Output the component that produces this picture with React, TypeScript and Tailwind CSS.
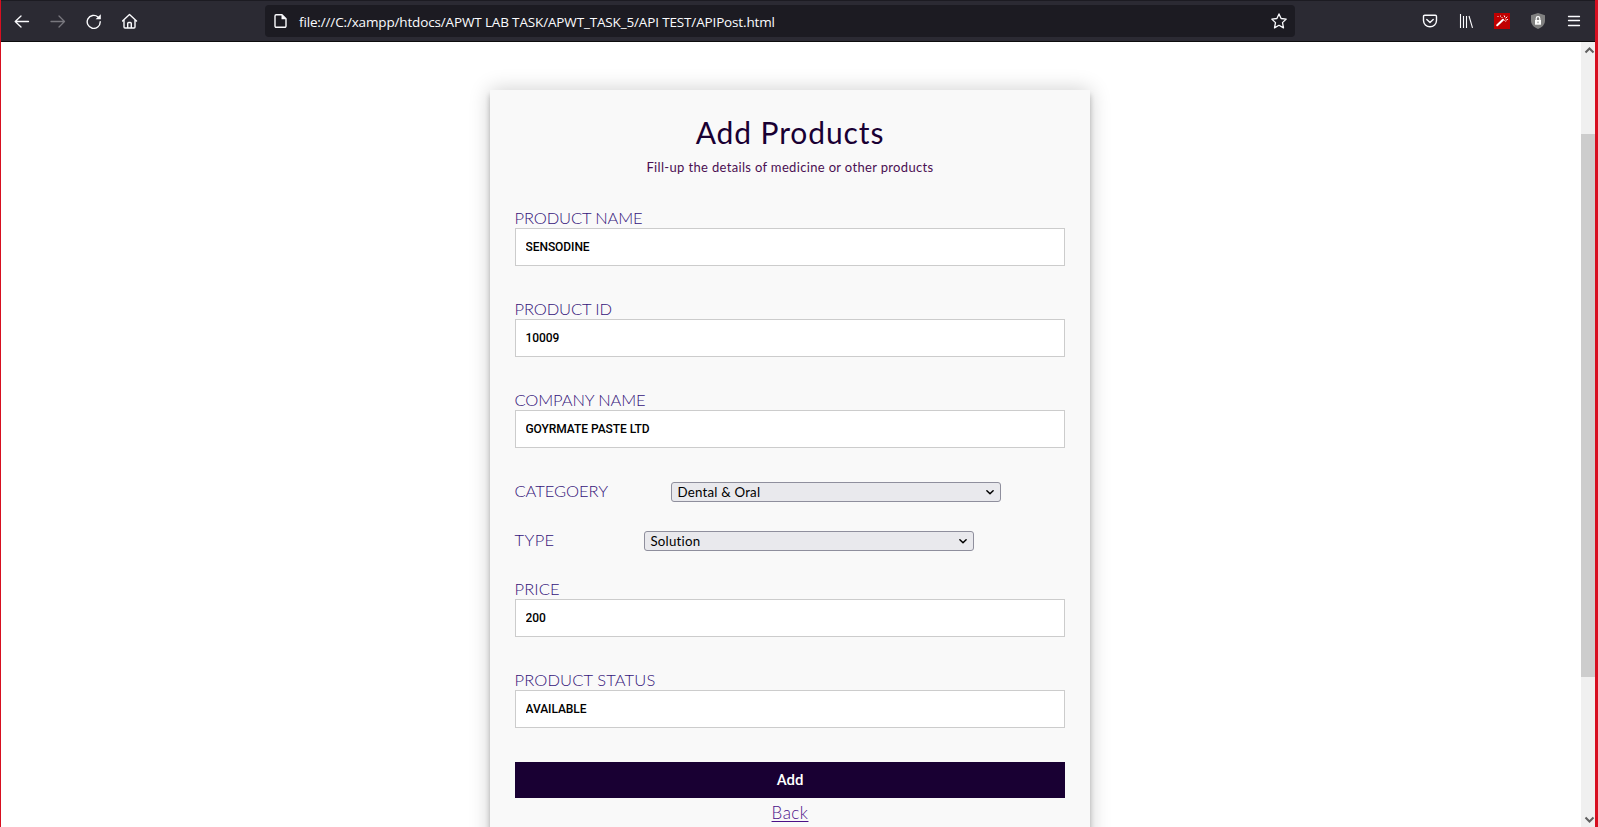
import React from "react";

const heading = "font-['Lato','Open_Sans',sans-serif]";

function BrowserBar() {
  return (
    <header className="flex h-[42px] shrink-0 items-center border-t border-b border-t-[#1c1b22] border-b-[#0c0c0d] bg-[#2b2a33] text-[#fbfbfe]">
      <nav className="flex w-[264px] items-center gap-5 pl-[13px]">
        <svg width="16" height="16" viewBox="0 0 16 16" fill="none" stroke="currentColor" strokeWidth="1.3" strokeLinecap="round" strokeLinejoin="round">
          <path d="M14.500 8.500H1.200M7 3L1.200 8.500L7 14" />
        </svg>
        <svg className="text-[#78777e]" width="16" height="16" viewBox="0 0 16 16" fill="none" stroke="currentColor" strokeWidth="1.3" strokeLinecap="round" strokeLinejoin="round">
          <path d="M1 8.500H14.500M9 3L14.500 8.500L9 14" />
        </svg>
        <svg width="16" height="16" viewBox="0 0 16 16" fill="none" stroke="currentColor" strokeWidth="1.4" strokeLinecap="round">
          <path d="M14.200 8.800A6.500 6.500 0 1 1 12 4" />
          <path d="M14.800 1.200V6.200H9.600Z" fill="currentColor" stroke="none" />
        </svg>
        <svg width="16" height="16" viewBox="0 0 16 16" fill="none" stroke="currentColor" strokeWidth="1.4" strokeLinejoin="round" strokeLinecap="round">
          <path d="M0.500 8L7.500 1.500L14.500 8M2 7V14A1 1 0 0 0 3 15H12A1 1 0 0 0 13 14V7M5.700 15V10.500A1 1 0 0 1 6.700 9.500H8.300A1 1 0 0 1 9.300 10.500V15" />
        </svg>
      </nav>
      <div className="flex h-8 w-[1030px] items-center rounded bg-[#1c1b22] pr-2 pl-2">
        <svg width="16" height="16" viewBox="0 0 16 16" fill="none" stroke="currentColor" strokeWidth="1.4" strokeLinejoin="round">
          <path d="M9 1.700H3.200A1.200 1.200 0 0 0 2 2.900V13.100A1.200 1.200 0 0 0 3.200 14.300H11.800A1.200 1.200 0 0 0 13 13.100V5.700Z" />
          <path d="M8.500 1.500V6.200H13.200Z" fill="currentColor" stroke="none" />
        </svg>
        <span className="mt-[2px] ml-[10px] flex-1 font-['Open_Sans','Noto_Sans',sans-serif] text-[13.5px] leading-[30px] tracking-[-0.15px] whitespace-nowrap">
          file:///C:/xampp/htdocs/APWT LAB TASK/APWT_TASK_5/API TEST/APIPost.html
        </span>
        <svg width="16" height="16" viewBox="0 0 16 16" fill="none" stroke="currentColor" strokeWidth="1.3" strokeLinejoin="round">
          <path d="M8 0.900L10.100 5.500L15.200 6.100L11.500 9.600L12.500 14.900L8 12.300L3.500 14.900L4.500 9.600L0.800 6.100L5.900 5.500Z" />
        </svg>
      </div>
      <div className="ml-auto flex items-center gap-5 pr-[13px]">
        <svg width="16" height="16" viewBox="0 0 16 16" fill="none" stroke="currentColor" strokeWidth="1.4" strokeLinecap="round" strokeLinejoin="round">
          <path d="M2.700 2.200H13.300A1.200 1.200 0 0 1 14.500 3.400V7.500A6.500 6.200 0 0 1 1.500 7.500V3.400A1.200 1.200 0 0 1 2.700 2.200ZM4.800 6.400L8 9.400L11.200 6.400" />
        </svg>
        <svg width="16" height="16" viewBox="0 0 16 16" fill="none" stroke="currentColor" strokeWidth="1.1">
          <path d="M2.500 1V15M5.500 3V15M8.500 3V15M11 3L14.500 14.800" />
        </svg>
        <svg width="16" height="16" viewBox="0 0 16 16" fill="none" stroke="#fff" strokeLinecap="round">
          <path d="M0 0H16V16H0Z" fill="#c00000" stroke="none" />
          <path d="M3.200 12.300L9 6.700" strokeWidth="2" />
          <path d="M4 3.500V3.600M6.500 3V3.200M8 4.500V4.600M10.300 2.800L10.800 4M13 4L11.800 5.200M13.500 6.500H13.400M10.800 7.500L11.500 8.300M12 6.700L12.500 7" strokeWidth="1" />
        </svg>
        <svg width="16" height="16" viewBox="0 0 16 16">
          <path d="M8 0L15 2.200V7.500C15 11.500 12 14.500 8 16C4 14.500 1 11.500 1 7.500V2.200Z" fill="#808080" />
          <path d="M5 7H11V11.700H5Z" fill="#fff" />
          <path d="M6.200 7V5.500A1.800 1.800 0 0 1 9.800 5.500V7" fill="none" stroke="#fff" strokeWidth="1.2" />
          <path d="M8 8.500V10.200" stroke="#808080" />
        </svg>
        <svg width="16" height="16" viewBox="0 0 16 16" fill="none" stroke="currentColor" strokeWidth="1.3" strokeLinecap="round">
          <path d="M2.500 3.500H13.500M2.500 7.500H13.500M2.500 12.500H13.500" />
        </svg>
      </div>
    </header>
  );
}

function Label({ children, tracking }: { children: string; tracking: string }) {
  return (
    <span className={`${heading} -ml-[0.5px] block text-[16.5px] leading-[19px] font-light whitespace-nowrap text-[#35157a] ${tracking}`}>
      {children}
    </span>
  );
}

function Field({ label, value, tracking = "tracking-[-0.13px]" }: { label: string; value: string; tracking?: string }) {
  return (
    <label className="block">
      <Label tracking={tracking}>{label}</Label>
      <input
        className="block h-[38px] w-full border border-[#cccccc] bg-white px-[9.5px] font-['Roboto',sans-serif] text-xs font-medium tracking-[-0.06px] text-black outline-none"
        defaultValue={value}
      />
    </label>
  );
}

function SelectRow({ label, value, indent, tracking }: { label: string; value: string; indent: string; tracking: string }) {
  return (
    <div className="flex h-5 items-start">
      <div className={indent}>
        <Label tracking={tracking}>{label}</Label>
      </div>
      <button className={`${heading} flex h-5 w-[330px] items-center justify-between rounded-[3px] border border-[#8f8f9d] bg-[#e9e9ed] pr-[6px] pl-[5.5px] text-[13.3px] text-black`}>
        <span className="pt-px leading-[17px] tracking-[0.2px]">{value}</span>
        <svg width="8" height="8" viewBox="0 0 8 8" fill="none" stroke="#000" strokeWidth="1.5" strokeLinecap="round" strokeLinejoin="round">
          <path d="M0.900 2.700L4 5.700L7.100 2.700" />
        </svg>
      </button>
    </div>
  );
}

function Scrollbar() {
  return (
    <div className="flex w-[14px] shrink-0 flex-col bg-[#f0f0f0]">
      <div className="flex h-[92px] items-start justify-end pt-[5px]">
        <svg width="11" height="7" viewBox="0 0 11 7" fill="none" stroke="#606060" strokeWidth="2">
          <path d="M1.500 5.500L5.500 1.500L9.500 5.500" />
        </svg>
      </div>
      <div className="h-[543px] bg-[#cdcdcd]" />
      <div className="flex flex-1 items-end justify-end pb-[4px]">
        <svg width="11" height="7" viewBox="0 0 11 7" fill="none" stroke="#606060" strokeWidth="2">
          <path d="M1.500 1.500L5.500 5.500L9.500 1.500" />
        </svg>
      </div>
    </div>
  );
}

export default function App() {
  return (
    <div className="flex h-[827px] w-[1598px] flex-col overflow-hidden border-r-[3px] border-l border-[#d70f20] bg-white">
      <BrowserBar />
      <div className="flex min-h-0 flex-1">
        <main className="flex-1 overflow-hidden pt-12">
          <form className="ml-[489px] h-[800px] w-[600px] bg-[#f9f9f9] px-[25px] pt-[25px] shadow-[0_0_20px_0_rgba(0,0,0,0.2),0_5px_5px_0_rgba(0,0,0,0.24)]">
            <h3 className={`${heading} text-center text-[30px] leading-[34px] tracking-[0.9px] text-[#190033]`}>Add Products</h3>
            <h4 className={`${heading} mt-[10px] text-center text-[13px] leading-4 tracking-[0.34px] text-[#4b0f52]`}>
              Fill-up the details of medicine or other products
            </h4>
            <div className="mt-[34px] flex flex-col gap-[34px]">
              <Field label="PRODUCT NAME" value="SENSODINE" />
              <Field label="PRODUCT ID" value="10009" />
              <Field label="COMPANY NAME" value="GOYRMATE PASTE LTD" />
            </div>
            <div className="mt-[34px] flex flex-col gap-[29px]">
              <SelectRow label="CATEGOERY" value="Dental & Oral" indent="w-[156px]" tracking="tracking-[-0.05px]" />
              <SelectRow label="TYPE" value="Solution" indent="w-[129px]" tracking="tracking-[0.4px]" />
            </div>
            <div className="mt-[29px] flex flex-col gap-[34px]">
              <Field label="PRICE" value="200" tracking="tracking-[0.1px]" />
              <Field label="PRODUCT STATUS" value="AVAILABLE" tracking="tracking-[0.13px]" />
              <button className="h-9 w-full bg-[#190033] font-['Roboto',sans-serif] text-[15px] font-medium tracking-[-0.1px] text-white">Add</button>
            </div>
            <div className="mt-[5px] flex justify-center">
              <a className={`${heading} text-[17px] leading-[19px] font-light tracking-[0.5px] text-[#4b1188] underline decoration-1 underline-offset-2`} href="#">Back</a>
            </div>
          </form>
        </main>
        <Scrollbar />
      </div>
    </div>
  );
}
